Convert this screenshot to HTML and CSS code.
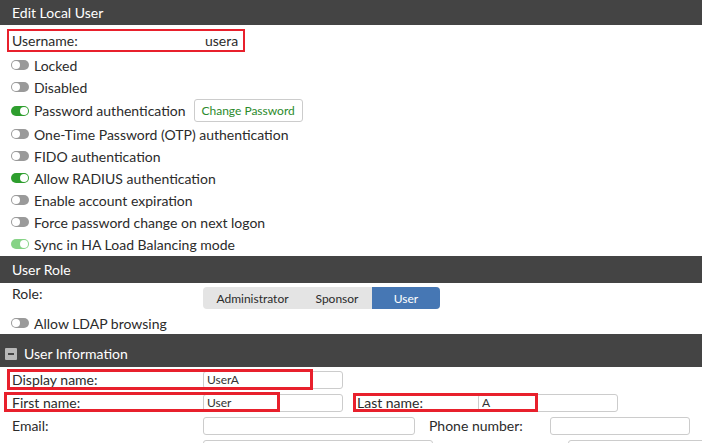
FILE: index.html
```html
<!DOCTYPE html>
<html lang="en">
<head>
    <meta charset="UTF-8">
    <meta name="viewport" content="width=device-width, initial-scale=1.0">
    <title>Edit Local User</title>
    <link rel="stylesheet" href="styles.css">
</head>
<body>
    <div class="section-head head-main">Edit Local User</div>

    <div class="username-box">
        <span class="label">Username:</span>
        <span class="value">usera</span>
    </div>

    <div class="toggle-row"><span class="toggle"></span>Locked</div>
    <div class="toggle-row"><span class="toggle"></span>Disabled</div>
    <div class="toggle-row tall">
        <span class="toggle on"></span>Password authentication
        <button class="btn-change">Change Password</button>
    </div>
    <div class="toggle-row"><span class="toggle"></span>One-Time Password (OTP) authentication</div>
    <div class="toggle-row"><span class="toggle"></span>FIDO authentication</div>
    <div class="toggle-row"><span class="toggle on"></span>Allow RADIUS authentication</div>
    <div class="toggle-row"><span class="toggle"></span>Enable account expiration</div>
    <div class="toggle-row"><span class="toggle"></span>Force password change on next logon</div>
    <div class="toggle-row"><span class="toggle on soft"></span>Sync in HA Load Balancing mode</div>

    <div class="section-head head-role">User Role</div>

    <div class="role-row">
        <span class="label">Role:</span>
        <div class="segmented">
            <span class="seg seg-admin">Administrator</span>
            <span class="seg seg-sponsor">Sponsor</span>
            <span class="seg seg-user active">User</span>
        </div>
    </div>
    <div class="toggle-row"><span class="toggle"></span>Allow LDAP browsing</div>

    <div class="section-head head-info">
        <span class="collapse-icon"></span>User Information
    </div>

    <div class="info-rows">
        <div class="info-row">
            <span class="label">Display name:</span>
            <input class="field" type="text" value="UserA">
            <span class="mark mark-display"></span>
        </div>
        <div class="info-row">
            <span class="label">First name:</span>
            <input class="field" type="text" value="User">
            <span class="label label-right">Last name:</span>
            <input class="field" type="text" value="A">
            <span class="mark mark-first"></span>
            <span class="mark mark-last"></span>
        </div>
        <div class="info-row">
            <span class="label">Email:</span>
            <input class="field wide" type="text">
            <span class="label label-right">Phone number:</span>
            <input class="field" type="text">
        </div>
        <div class="info-row">
            <span class="label"></span>
            <input class="field wider" type="text">
            <span class="label label-right"></span>
            <input class="field" type="text">
        </div>
    </div>
</body>
</html>
```

FILE: styles.css
```css
body {
    margin: 0;
    font-family: "Lato", "Open Sans", sans-serif;
    font-size: 14px;
    color: #2b2b2b;
    background-color: #fff;
    overflow: hidden;
}
.section-head {
    background-color: #444;
    color: #fff;
    padding-left: 12px;
    display: flex;
    align-items: center;
}
.head-main {
    height: 25px;
}
.head-role {
    height: 27px;
    margin-top: 1px;
}
.head-info {
    height: 33px;
    padding-left: 5px;
    padding-top: 6px;
    box-sizing: border-box;
}
.collapse-icon {
    width: 12px;
    height: 12px;
    background-color: #b8b8b8;
    border-radius: 1px;
    margin-right: 7px;
    position: relative;
}
.collapse-icon::after {  /* the minus bar */
    content: "";
    position: absolute;
    left: 3px;
    top: 5px;
    width: 6px;
    height: 2px;
    background-color: #444;
}

/* username, boxed in red */
.username-box {
    display: flex;
    align-items: center;
    width: 238px;
    height: 23px;
    box-sizing: border-box;
    margin: 4px 0 0 7px;
    padding-left: 3px;
    border: 2px solid #e8202c;
}
.username-box .label {
    width: 193px;
}

/* toggle rows */
.toggle-row {
    display: flex;
    align-items: center;
    height: 22px;
    padding-left: 11px;
}
.username-box + .toggle-row {
    margin-top: 2px;
}
.toggle-row.tall {
    height: 25px;
}
.toggle {
    width: 18px;
    height: 10px;
    border-radius: 5px;
    background-color: #9a9a9a;
    margin-right: 5px;
    position: relative;
    flex-shrink: 0;
}
.toggle::after {
    content: "";
    position: absolute;
    top: 1px;
    left: 1px;
    width: 8px;
    height: 8px;
    border-radius: 50%;
    background-color: #fff;
}
.toggle.on {
    background-color: #2e9e2e;
}
.toggle.on::after {
    left: 9px;
}
.toggle.soft {
    background-color: #86d386;
}
.btn-change {
    margin-left: 8px;
    height: 23px;
    width: 109px;
    padding: 0;
    font-family: inherit;
    font-size: 12px;
    color: #2b8a2b;
    background-color: #fff;
    border: 1px solid #ccc;
    border-radius: 3px;
}

/* role selector */
.role-row {
    display: flex;
    align-items: flex-start;
    height: 29px;
    padding-left: 12px;
}
.role-row .label {
    width: 191px;
    line-height: 22px;
}
.segmented {
    display: flex;
    margin-top: 4px;
    height: 22px;
    background-color: #e4e4e4;
    border-radius: 4px;
    overflow: hidden;
    font-size: 12px;
}
.seg {
    display: flex;
    align-items: center;
    justify-content: center;
}
.seg-admin { width: 99px; }
.seg-sponsor { width: 70px; }
.seg-user { width: 68px; }
.seg.active {
    background-color: #4677b4;
    color: #fff;
}

/* user information fields */
.info-row {
    display: flex;
    align-items: center;
    height: 23px;
    padding-left: 12px;
    position: relative;
}
.info-rows {
    padding-top: 1px;
}
.info-row .label {
    width: 191px;
    flex-shrink: 0;
}
.info-row .label-right {
    width: 121px;
    margin-left: 14px;
}
.field {
    width: 140px;
    height: 18px;
    box-sizing: border-box;
    margin: 0;
    padding: 0 3px;
    border: 1px solid #ccc;
    border-radius: 3px;
    font-family: inherit;
    font-size: 12px;
    color: #333;
    flex-shrink: 0;
}
.field.wide { width: 212px; }
.field.wider { width: 230px; }

/* red annotation boxes drawn over the form */
.mark {
    position: absolute;
    border: 3px solid #e8202c;
    box-sizing: border-box;
    pointer-events: none;
}
.mark-display {
    left: 7px;
    top: 1px;
    width: 306px;
    height: 21px;
}
.mark-first {
    left: 4px;
    top: 1px;
    width: 276px;
    height: 20px;
}
.mark-last {
    left: 353px;
    top: 2px;
    width: 185px;
    height: 19px;
}
```
